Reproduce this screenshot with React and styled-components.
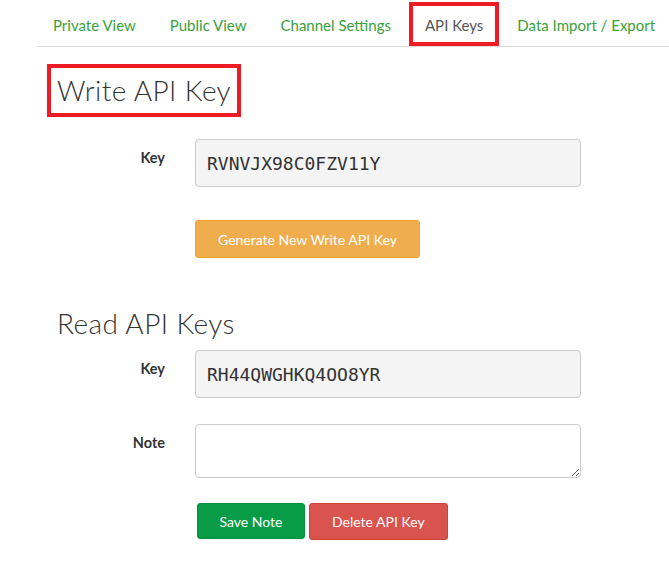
import React from "react";
import styled, { createGlobalStyle } from "styled-components";

const Global = createGlobalStyle`
  html, body { margin: 0; padding: 0; background: #fff; }
  body { font-family: Lato, "Open Sans", sans-serif; color: #333; }
  * { box-sizing: border-box; }
`;

const Page = styled.div`
  width: 669px;
  min-height: 568px;
  overflow: hidden;
`;

const Tabs = styled.ul`
  list-style: none;
  margin: 0 0 0 37px;
  padding: 0;
  display: flex;
  height: 47px;
  border-bottom: 1px solid #ddd;
  white-space: nowrap;
`;

const Tab = styled.li`
  margin: 2px 2px 0 0;
  height: 44px;
  display: flex;
  align-items: center;
  padding: ${(p) => (p.$active ? "2px 12px 0" : "2px 16px 0")};
  border: ${(p) => (p.$active ? "4px solid #ed1c24" : "none")};
  font-size: 15px;
  color: ${(p) => (p.$active ? "#555" : "#3aa13a")};
`;

const Content = styled.div`
  padding-left: 47px;
`;

const Heading = styled.h2`
  display: block;
  width: fit-content;
  margin: ${(p) => p.$mt}px 0 0 0;
  padding: 0 6px;
  height: 53px;
  line-height: 45px;
  border: 4px solid ${(p) => (p.$highlight ? "#ed1c24" : "transparent")};
  font-family: Lato, sans-serif;
  font-weight: 300;
  font-size: 28px;
  letter-spacing: 0.4px;
  color: #333;
`;

const Row = styled.div`
  display: grid;
  grid-template-columns: 148px 386px;
  margin-top: ${(p) => p.$mt}px;
`;

const Label = styled.label`
  text-align: right;
  padding: 9px 30px 0 0;
  line-height: 20px;
  font-size: 14.5px;
  font-weight: 700;
  color: #333;
`;

const KeyField = styled.div`
  height: 48px;
  display: flex;
  align-items: center;
  padding: 0 11px;
  background: #f4f4f4;
  border: 1px solid #ccc;
  border-radius: 4px;
  font-family: "DejaVu Sans Mono", monospace;
  font-size: 18px;
  color: #333;
`;

const NoteArea = styled.textarea`
  height: 54px;
  width: 386px;
  border: 1px solid #ccc;
  border-radius: 4px;
  background: #fff;
  font-family: Lato, sans-serif;
  font-size: 14px;
  padding: 6px 12px;
  resize: vertical;
  display: block;
  margin: 0;
`;

const Actions = styled.div`
  grid-column: 2;
  display: flex;
  gap: 4px;
  padding-left: ${(p) => p.$indent || 0}px;
`;

const Button = styled.button`
  height: ${(p) => p.$h || 37}px;
  padding: 0 ${(p) => p.$px || 20}px;
  border: 1px solid ${(p) => p.$border};
  background: ${(p) => p.$bg};
  color: #fff;
  border-radius: 3px;
  font-family: Lato, sans-serif;
  font-size: 14px;
  cursor: pointer;
`;

export default function App() {
  return (
    <Page>
      <Global />
      <Tabs>
        <Tab>Private View</Tab>
        <Tab>Public View</Tab>
        <Tab>Channel Settings</Tab>
        <Tab $active>API Keys</Tab>
        <Tab>Data Import / Export</Tab>
      </Tabs>
      <Content>
        <Heading $highlight $mt={17}>Write API Key</Heading>
        <Row $mt={22}>
          <Label>Key</Label>
          <KeyField>RVNVJX98C0FZV11Y</KeyField>
        </Row>
        <Row $mt={33}>
          <Actions>
            <Button $bg="#f0ad4e" $border="#eea236" $h={38} $px={22}>
              Generate New Write API Key
            </Button>
          </Actions>
        </Row>
        <Heading $mt={39}>Read API Keys</Heading>
        <Row $mt={0}>
          <Label>Key</Label>
          <KeyField>RH44QWGHKQ4OO8YR</KeyField>
        </Row>
        <Row $mt={26}>
          <Label>Note</Label>
          <NoteArea defaultValue="" />
        </Row>
        <Row $mt={25}>
          <Actions $indent={2}>
            <Button $bg="#089c47" $border="#07913f" $h={36} $px={21.5}>
              Save Note
            </Button>
            <Button $bg="#d9534f" $border="#d43f3a" $h={37} $px={22}>
              Delete API Key
            </Button>
          </Actions>
        </Row>
      </Content>
    </Page>
  );
}
